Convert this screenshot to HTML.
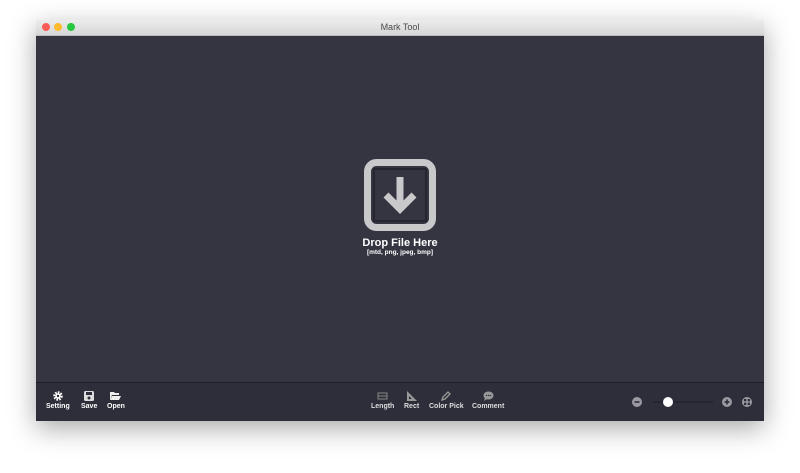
<!DOCTYPE html>
<html><head><style>
body{margin:0;width:800px;height:473px;background:#fff;position:relative;overflow:hidden;font-family:"Liberation Sans",sans-serif}
.win{position:absolute;left:36px;top:20px;width:728px;height:400px;box-shadow:0 8px 25px rgba(0,0,0,.35);background:#343541}
.tb{position:absolute;left:0;top:0;width:728px;height:15px;background:linear-gradient(#ececec,#d6d6d6);border-bottom:1px solid #bdbdbd;text-align:center;font-size:9px;line-height:15px;color:#4a4a4a}
.dot{position:absolute;top:3px;width:8px;height:8px;border-radius:50%}
.bar{position:absolute;left:0;top:362px;width:728px;height:38px;background:#2d2e39;border-top:1px solid #1e1f27}
.it{position:absolute;top:8px;text-align:center;color:#fff;font-size:7px;font-weight:bold}
.it svg{display:block;margin:0 auto 2px}
.c{position:absolute;left:0;width:728px;text-align:center;color:#fff;font-weight:bold}
</style></head><body>
<div class="win">
<div class="tb">Mark Tool
<div class="dot" style="left:6px;background:#fc5b57"></div>
<div class="dot" style="left:18px;background:#fdbb2e"></div>
<div class="dot" style="left:31px;background:#27c840"></div>
</div>
<svg style="position:absolute;left:328px;top:139px" width="72" height="72" viewBox="0 0 72 72">
<rect x="3.5" y="3.5" width="65" height="65" rx="9" fill="none" stroke="#c9c9cc" stroke-width="7"/>
<rect x="10" y="10" width="52" height="52" fill="none" stroke="#1f2028" stroke-width="1.5"/>
<path d="M36 18V50M22 36L36 50L50 36" fill="none" stroke="#c9c9cc" stroke-width="7"/>
</svg>
<div class="c" style="top:217px;font-size:11px">Drop File Here</div>
<div class="c" style="top:229px;font-size:6.5px">[mtd, png, jpeg, bmp]</div>
<div class="bar">
<div class="it" style="left:10px"><svg width="10" height="10" viewBox="0 0 10 10"><circle cx="5" cy="5" r="3.5" fill="none" stroke="#fff" stroke-width="2.5" stroke-dasharray="1.6 1.1"/><circle cx="5" cy="5" r="2.8" fill="#fff"/><circle cx="5" cy="5" r="1.2" fill="#2d2e39"/></svg>Setting</div>
<div class="it" style="left:45px"><svg width="10" height="10"><rect x="0" y="0" width="10" height="10" rx="1.5" fill="#ddd"/><rect x="2" y="1" width="6" height="3" fill="#2d2e39"/><circle cx="5" cy="7" r="1.5" fill="#2d2e39"/></svg>Save</div>
<div class="it" style="left:71px"><svg width="11" height="10"><path d="M0 1h4l1 1h4v2H2L0 9z" fill="#eee"/><path d="M2 5h9l-2 4H0z" fill="#eee"/></svg>Open</div>
<div class="it" style="left:335px;color:#ddd"><svg width="11" height="10"><rect x="1" y="2" width="9" height="6" fill="none" stroke="#888" stroke-width="1"/><path d="M1 5h9" stroke="#888"/></svg>Length</div>
<div class="it" style="left:368px;color:#ddd"><svg width="11" height="10"><path d="M1 0v10h10z" fill="#999"/><path d="M3 5v3h3z" fill="#2d2e39"/></svg>Rect</div>
<div class="it" style="left:393px;color:#ddd"><svg width="10" height="10"><path d="M1 9l1-3 5-5 2 2-5 5z" fill="none" stroke="#999" stroke-width="1.3"/></svg>Color Pick</div>
<div class="it" style="left:436px;color:#ddd"><svg width="11" height="10"><ellipse cx="5.5" cy="4.5" rx="5" ry="4" fill="#999"/><path d="M2 7l-1 3 3-2z" fill="#999"/><circle cx="3.5" cy="4.5" r=".7" fill="#2d2e39"/><circle cx="5.5" cy="4.5" r=".7" fill="#2d2e39"/><circle cx="7.5" cy="4.5" r=".7" fill="#2d2e39"/></svg>Comment</div>
<svg style="position:absolute;left:595px;top:13px" width="125" height="12">
<circle cx="6" cy="6" r="5" fill="#9a9aa0"/><rect x="3.5" y="5.2" width="5" height="1.6" fill="#2d2e39"/>
<line x1="22" y1="6" x2="82" y2="6" stroke="#1b1c23" stroke-width="1"/>
<circle cx="37" cy="6" r="5" fill="#fff"/>
<circle cx="96" cy="6" r="5" fill="#9a9aa0"/><rect x="93.5" y="5.2" width="5" height="1.6" fill="#2d2e39"/><rect x="95.2" y="3.5" width="1.6" height="5" fill="#2d2e39"/>
<circle cx="116" cy="6" r="5" fill="#9a9aa0"/><rect x="113" y="3" width="2.3" height="2.3" fill="#2d2e39"/><rect x="116.7" y="3" width="2.3" height="2.3" fill="#2d2e39"/><rect x="113" y="6.7" width="2.3" height="2.3" fill="#2d2e39"/><rect x="116.7" y="6.7" width="2.3" height="2.3" fill="#2d2e39"/>
</svg>
</div>
</div>
</body></html>
